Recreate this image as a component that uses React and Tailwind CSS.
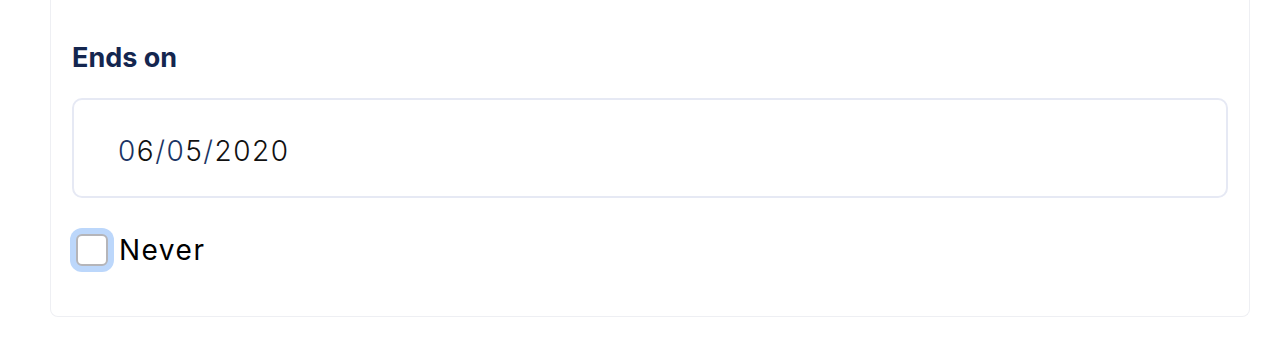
export default function App() {
  return (
    <div className="min-h-[358px] bg-white font-['Inter',sans-serif]">
      <div className="ml-[50px] w-[1200px] border-x border-b border-[#eeeff3] rounded-b-[8px] bg-white px-[21px] pt-[42px] pb-[50px]">
        {/* Field label */}
        <label className="block text-[27px] leading-[32px] font-bold text-[#14264f]">Ends on</label>

        {/* Date input */}
        <div className="mt-[24px] h-[100px] flex items-center rounded-[10px] border-2 border-[#e6e9f4] pl-[44px] pt-[5px]">
          <span className="text-[28px] font-light tracking-[1.5px] text-[#111]">
            <span className="text-[#1b3565]">0</span>6<span className="text-[#1b3565]">/0</span>5<span className="text-[#1b3565]">/</span>2020
          </span>
        </div>

        {/* Never checkbox */}
        <label className="mt-[36px] flex items-center gap-[11px]">
          <span className="ml-[4px] w-[32px] h-[32px] rounded-[6px] border-2 border-[#b5b5b9] bg-white shadow-[0_0_0_6px_#bcd7fb]" />
          <span className="text-[28px] leading-[32px] tracking-[1.5px] text-black">Never</span>
        </label>
      </div>
    </div>
  );
}
